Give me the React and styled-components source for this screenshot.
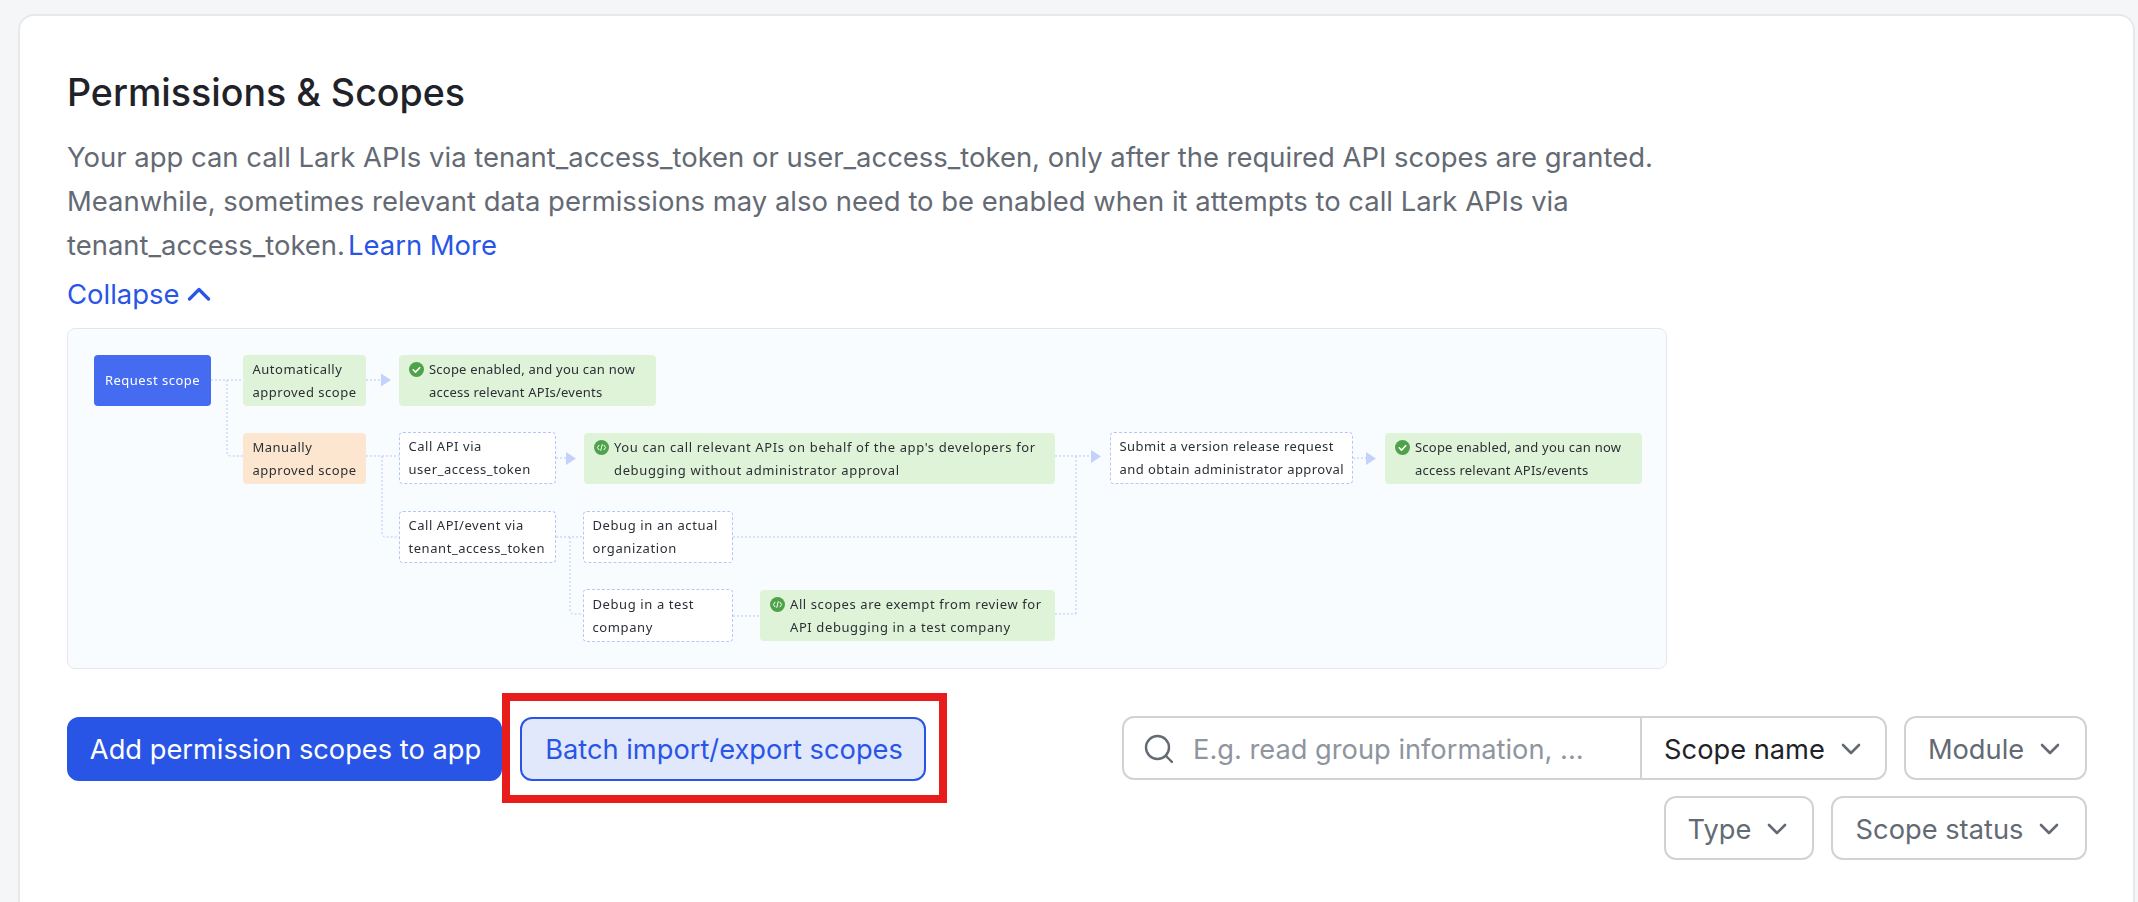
import React from "react";
import styled, { createGlobalStyle } from "styled-components";

const Global = createGlobalStyle`
  html, body { margin: 0; padding: 0; height: 902px; overflow: hidden; background: #f5f6f8; }
  body { font-family: Inter, "Liberation Sans", sans-serif; }
`;

const Page = styled.div`
  padding: 14px 3px 0 18px;
  position: relative;
  height: 888px;
  overflow: hidden;
`;
const Card = styled.section`
  background: #fff;
  border: 2px solid #e6e8eb;
  border-bottom: 0;
  border-radius: 16px 16px 0 0;
  padding: 51px 46px 0 47px;
  height: 873px;
`;
const Title = styled.h1`
  margin: 0;
  font-size: 37.6px;
  line-height: 52px;
  font-weight: 500;
  color: #1f2329;
`;
const Desc = styled.p`
  margin: 16px 0 0;
  width: 1600px;
  font-size: 27.45px;
  line-height: 44px;
  color: #646a73;
`;
const TextLink = styled.a`
  margin-left: 3px;
  color: #2955e7;
`;
const Collapse = styled.div`
  margin-top: 5px;
  display: flex;
  align-items: center;
  gap: 8px;
  font-size: 27.45px;
  line-height: 44px;
  color: #2955e7;
`;
const Diagram = styled.div`
  position: relative;
  box-sizing: border-box;
  margin-top: 12px;
  width: 1600px;
  height: 341px;
  background: #f8fcff;
  border: 1px solid #e3e6ea;
  border-radius: 8px;
  filter: blur(0.3px);
`;
const Wires = styled.svg`
  position: absolute;
  left: -1px;
  top: -1px;
`;
const Node = styled.div`
  position: absolute;
  box-sizing: border-box;
  left: ${p => p.$x - 68}px;
  top: ${p => p.$y - 329}px;
  width: ${p => p.$w}px;
  height: ${p => p.$h}px;
  padding: 0 0 0 ${p => (p.$icon ? 30 : 9.5)}px;
  border-radius: 4px;
  font-family: "Noto Sans", Roboto, sans-serif;
  font-size: 13px;
  line-height: 23px;
  letter-spacing: ${p => p.$ls}px;
  color: #2b2f36;
  white-space: nowrap;
  display: flex;
  flex-direction: column;
  justify-content: center;
  ${p => p.$kind === "blue" && `background:#456bf0;color:#fff;align-items:center;padding:0;`}
  ${p => p.$kind === "green" && `background:#dff3d8;`}
  ${p => p.$kind === "orange" && `background:#fde6cf;`}
  ${p => p.$kind === "dash" && `background:#fff;border:1px dashed #b5c7fa;padding-left:8.5px;`}
`;
const NodeIcon = styled.svg`
  position: absolute;
  left: 10px;
  top: 7px;
`;

const Toolbar = styled.div`
  display: flex;
  justify-content: space-between;
  align-items: flex-start;
  margin-top: 48px;
`;
const Actions = styled.div`
  display: flex;
  gap: 18px;
  position: relative;
`;
const Button = styled.button`
  box-sizing: border-box;
  height: 64px;
  width: ${p => p.$w}px;
  padding: 0 0 0 2px;
  border-radius: 12px;
  border: 2px solid #2955e7;
  background: ${p => (p.$primary ? "#2955e7" : "#e1e8fb")};
  color: ${p => (p.$primary ? "#fff" : "#2955e7")};
  font-family: inherit;
  font-size: 27.25px;
  white-space: nowrap;
`;
const Highlight = styled.div`
  position: absolute;
  left: 435px;
  top: -24px;
  width: 445px;
  height: 110px;
  box-sizing: border-box;
  border: 8px solid #e91c1c;
`;
const Filters = styled.div`
  display: flex;
  flex-wrap: wrap;
  justify-content: flex-end;
  gap: 17px;
  width: 965px;
`;
const SearchGroup = styled.div`
  box-sizing: border-box;
  width: 765px;
  height: 64px;
  display: flex;
  border: 2px solid #d0d3d6;
  border-radius: 12px;
  margin-top: -1px;
`;
const SearchInput = styled.div`
  flex: 1;
  display: flex;
  align-items: center;
  gap: 19px;
  padding: 2px 0 0 20px;
  font-size: 27.25px;
  color: #8f959e;
  white-space: nowrap;
`;
const SelectInner = styled.div`
  width: 245px;
  border-left: 2px solid #d0d3d6;
  display: flex;
  align-items: center;
  justify-content: center;
  gap: 16px;
  padding: 2px 2px 0 0;
  box-sizing: border-box;
  font-size: 27.25px;
  color: #1f2329;
  white-space: nowrap;
`;
const Select = styled.div`
  box-sizing: border-box;
  height: 64px;
  width: ${p => p.$w}px;
  display: flex;
  align-items: center;
  justify-content: center;
  gap: 16px;
  padding: 2px 3px 0 0;
  border: 2px solid #d0d3d6;
  border-radius: 12px;
  font-size: 27.25px;
  color: #646a73;
  margin-top: -1px;
  white-space: nowrap;
`;

const Chevron = ({ color = "#646a73" }) => (
  <svg width="20" height="12" viewBox="0 0 20 12" fill="none">
    <path d="M2 2l8 8 8-8" stroke={color} strokeWidth="2.6" strokeLinecap="round" strokeLinejoin="round" />
  </svg>
);

const Check = () => (
  <NodeIcon width="15" height="15" viewBox="0 0 15 15">
    <circle cx="7.5" cy="7.5" r="7.5" fill="#4ea24a" />
    <path d="M4.2 7.8l2.3 2.3 4.2-4.4" fill="none" stroke="#fff" strokeWidth="1.6" strokeLinecap="round" strokeLinejoin="round" />
  </NodeIcon>
);
const Code = () => (
  <NodeIcon width="15" height="15" viewBox="0 0 15 15">
    <circle cx="7.5" cy="7.5" r="7.5" fill="#4ea24a" />
    <path d="M5 5.2L3.4 7.5 5 9.8M10 5.2l1.6 2.3L10 9.8M8.2 4.6L6.8 10.4" fill="none" stroke="#fff" strokeWidth="1" strokeLinecap="round" strokeLinejoin="round" />
  </NodeIcon>
);

const wires = [
  "M211 380H243", "M227 380V452q0 4 4 4H243", "M366 380H381",
  "M366 456H399", "M382 456V533q0 4 4 4H399", "M556 458H566",
  "M556 537H583", "M570 537V610q0 4 4 4H583",
  "M1055 456H1091", "M1076 456V614", "M733 537H1076", "M733 616H760", "M1055 614H1076",
  "M1353 458H1366",
];
const arrows = [[381, 380], [566, 458.5], [1091, 456.5], [1366, 458.5]];

const D = ({ x, y, w, h, kind, icon, ls = 0.5, children }) => (
  <Node $x={x} $y={y} $w={w} $h={h} $kind={kind} $icon={!!icon} $ls={ls}>
    {icon === "check" && <Check />}
    {icon === "code" && <Code />}
    {children}
  </Node>
);

export default function App() {
  return (
    <Page>
      <Global />
      <Card>
        <Title>Permissions &amp; Scopes</Title>
        <Desc>
          Your app can call Lark APIs via tenant_access_token or user_access_token, only after the required API scopes are granted. Meanwhile, sometimes relevant data permissions may also need to be enabled when it attempts to call Lark APIs via tenant_access_token.<TextLink>Learn More</TextLink>
        </Desc>
        <Collapse>
          Collapse
          <svg width="24" height="14" viewBox="0 0 24 14" fill="none">
            <path d="M2.5 12L12 2.5 21.5 12" stroke="#2955e7" strokeWidth="3.2" strokeLinecap="round" strokeLinejoin="round" />
          </svg>
        </Collapse>
        <Diagram>
          <Wires width="1600" height="341" viewBox="67 328 1600 341">
            <g fill="none" stroke="#b5c7fa" strokeWidth="1" strokeDasharray="2 2">
              {wires.map(d => <path key={d} d={d} />)}
            </g>
            {arrows.map(([x, y]) => (
              <path key={x} d={`M${x} ${y - 6.5}L${x + 10} ${y}L${x} ${y + 6.5}Z`} fill="#c3d1fb" />
            ))}
          </Wires>
          <D x={94} y={355} w={117} h={51} kind="blue"><span>Request scope</span></D>
          <D x={243} y={355} w={123} h={51} kind="green"><span>Automatically</span><span>approved scope</span></D>
          <D x={399} y={355} w={257} h={51} kind="green" icon="check" ls={0.22}><span>Scope enabled, and you can now</span><span>access relevant APIs/events</span></D>
          <D x={243} y={433} w={123} h={51} kind="orange"><span>Manually</span><span>approved scope</span></D>
          <D x={399} y={432} w={157} h={52} kind="dash" ls={0.55}><span>Call API via</span><span>user_access_token</span></D>
          <D x={584} y={433} w={471} h={51} kind="green" icon="code" ls={0.63}><span>You can call relevant APIs on behalf of the app's developers for</span><span>debugging without administrator approval</span></D>
          <D x={399} y={511} w={157} h={52} kind="dash" ls={0.55}><span>Call API/event via</span><span>tenant_access_token</span></D>
          <D x={583} y={511} w={150} h={52} kind="dash" ls={0.6}><span>Debug in an actual</span><span>organization</span></D>
          <D x={583} y={589} w={150} h={53} kind="dash" ls={0.6}><span>Debug in a test</span><span>company</span></D>
          <D x={760} y={590} w={295} h={51} kind="green" icon="code" ls={0.6}><span>All scopes are exempt from review for</span><span>API debugging in a test company</span></D>
          <D x={1110} y={432} w={243} h={52} kind="dash" ls={0.46}><span>Submit a version release request</span><span>and obtain administrator approval</span></D>
          <D x={1385} y={433} w={257} h={51} kind="green" icon="check" ls={0.22}><span>Scope enabled, and you can now</span><span>access relevant APIs/events</span></D>
        </Diagram>
        <Toolbar>
          <Actions>
            <Button $primary $w={435}>Add permission scopes to app</Button>
            <Button $w={406}>Batch import/export scopes</Button>
            <Highlight />
          </Actions>
          <Filters>
            <SearchGroup>
              <SearchInput>
                <svg width="30" height="30" viewBox="0 0 30 30" fill="none">
                  <circle cx="13.5" cy="13.5" r="11.5" stroke="#646a73" strokeWidth="2.4" />
                  <path d="M22 22l6 6" stroke="#646a73" strokeWidth="2.4" strokeLinecap="round" />
                </svg>
                E.g. read group information, ...
              </SearchInput>
              <SelectInner>Scope name <Chevron /></SelectInner>
            </SearchGroup>
            <Select $w={183}>Module <Chevron /></Select>
            <Select $w={150}>Type <Chevron /></Select>
            <Select $w={256}>Scope status <Chevron /></Select>
          </Filters>
        </Toolbar>
      </Card>
    </Page>
  );
}
